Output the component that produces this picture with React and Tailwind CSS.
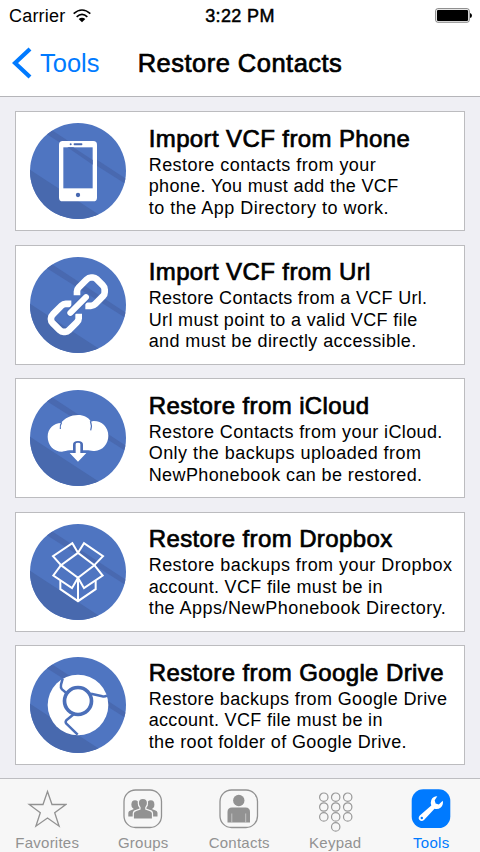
import React from "react";

function Disc({ shift = 0, children }) {
  return (
    <svg viewBox="60 54 288 288" className="h-24 w-24 shrink-0">
      <defs>
        <clipPath id="disc">
          <circle cx="204" cy="198" r="144" />
        </clipPath>
      </defs>
      <g clipPath="url(#disc)">
        <rect x="60" y="54" width="288" height="288" fill="#4f75c1" />
        <path d="M108 86 L126 76 L352 224 V240 Z" fill="#4969b0" />
        <path d="M56 192 L272 332 V345 H56 Z" fill="#4869ae" />
      </g>
      <g transform={`translate(0 ${shift})`}>{children}</g>
    </svg>
  );
}

const PhoneIcon = () => (
  <Disc>
    <rect x="147" y="108" width="114" height="181" rx="11" fill="#fff" />
    <rect x="160" y="127" width="88" height="123" fill="#4f75c1" />
    <path d="M172 127 H190 L248 165 V179 Z" fill="#4969b0" />
    <circle cx="182" cy="117.500" r="3" fill="#4667b0" />
    <rect x="191" y="114.500" width="26" height="6" rx="2" fill="#4667b0" />
    <circle cx="204" cy="270" r="6.500" fill="#4667b0" />
  </Disc>
);

const LinkIcon = () => (
  <Disc shift={4.5}>
    <g fill="none" stroke="#fff" strokeWidth="20" strokeLinejoin="round">
      <path d="M201 164 L201 153 Q201 146 206 141 L230 117 Q236 111 243 111 L249 111 Q255 111 260 116 L278 134 Q284 140 284 147 L284 155 Q284 162 279 167 L256 190 Q250 196 243 196 L226 196" />
      <path d="M184 190 L167 190 Q160 190 155 195 L130 220 Q123 227 123 233 L123 237 Q123 243 128 248 L149 269 Q154 274 160 274 L166 274 Q172 274 177 269 L200 246 Q206 240 206 234 L206 220" />
    </g>
    <path d="M181 217 L228 170" fill="none" stroke="#4c70bb" strokeWidth="27" strokeLinecap="round" />
    <path d="M181 217 L228 170" fill="none" stroke="#fff" strokeWidth="18" strokeLinecap="round" />
  </Disc>
);

const CloudIcon = () => (
  <Disc shift={3}>
    <path d="M153 150 C132 150 113 166 113 191 C113 216 131 236 156 236 C164 236 170 232 178 232 H230 C238 232 244 235 254 234 C278 232 295 213 295 188 C295 162 275 144 252 144 C248 144 246 145 243 146 C236 133 221 126 204 126 C183 126 164 135 153 150 Z" fill="#fff" />
    <path d="M151 168 C150 160 151 154 155 148 M241 145 C245 154 245 163 242 172" fill="none" stroke="#4c70bb" strokeWidth="3.500" />
    <path d="M189 240 V215 Q189 204 204 204 Q219 204 219 215 V240 Z" fill="#4a6cb6" />
    <path d="M197 213 Q197 209 204 209 Q211 209 211 213 V240 H229 L204 266 L179 240 H197 Z" fill="#fff" />
  </Disc>
);

const BoxIcon = () => (
  <Disc shift={4.5}>
    <g fill="none" stroke="#fff" strokeWidth="6" strokeLinejoin="miter">
      <path d="M204 136 L253 173 L204 211 L153 173 Z" />
      <path d="M204 136 L187 107 L129 146 L153 173" />
      <path d="M204 136 L222 107 L279 146 L253 173" />
      <path d="M153 173 L130 204 L186 242 L204 211 L222 242 L278 204 L253 173" />
      <path d="M151 220 V245 L204 281 L257 245 V220 M204 211 V281" />
    </g>
  </Disc>
);

const ChromeIcon = () => (
  <Disc shift={3}>
    <circle cx="204" cy="195" r="91" fill="#fff" />
    <circle cx="204" cy="183" r="40.500" fill="none" stroke="#4b6fb9" strokeWidth="11" />
    <g fill="none" stroke="#4b6fb9" strokeWidth="7.500" strokeLinejoin="round">
      <path d="M169 159 L156 148 Q151 143 153 134 L158 116" />
      <path d="M243 161 L277 169 Q284 171 291 167" />
      <path d="M192 222 L169 241 Q165 246 169 251 L203 284" />
    </g>
  </Disc>
);

const cards = [
  {
    icon: PhoneIcon,
    title: "Import VCF from Phone",
    lines: [
      ["Restore contacts from your", "tracking-[0.44px]"],
      ["phone. You must add the VCF", "tracking-[0.36px]"],
      ["to the App Directory to work.", "tracking-[0.49px]"],
    ],
  },
  {
    icon: LinkIcon,
    title: "Import VCF from Url",
    lines: [
      ["Restore Contacts from a VCF Url.", "tracking-[0.3px]"],
      ["Url must point to a valid VCF file", "tracking-[0.35px]"],
      ["and must be directly accessible.", "tracking-[0.4px]"],
    ],
  },
  {
    icon: CloudIcon,
    title: "Restore from iCloud",
    lines: [
      ["Restore Contacts from your iCloud.", "tracking-[0.38px]"],
      ["Only the backups uploaded from", "tracking-[0.45px]"],
      ["NewPhonebook can be restored.", "tracking-[0.4px]"],
    ],
  },
  {
    icon: BoxIcon,
    title: "Restore from Dropbox",
    lines: [
      ["Restore backups from your Dropbox", "tracking-[0.44px]"],
      ["account. VCF file must be in", "tracking-[0.32px]"],
      ["the Apps/NewPhonebook Directory.", "tracking-[0.46px]"],
    ],
  },
  {
    icon: ChromeIcon,
    title: "Restore from Google Drive",
    lines: [
      ["Restore backups from Google Drive", "tracking-[0.38px]"],
      ["account. VCF file must be in", "tracking-[0.32px]"],
      ["the root folder of Google Drive.", "tracking-[0.38px]"],
    ],
  },
];

function Card({ icon: Icon, title, lines }) {
  return (
    <section className="flex h-[120px] w-full border border-[#bcbcbf] bg-white pt-[11px] pl-[14px]">
      <Icon />
      <div className="ml-[22.7px] pt-[0.5px] whitespace-nowrap">
        <h2 className="text-[24px] leading-[29px] tracking-[0.39px] [-webkit-text-stroke:0.7px_#000]">{title}</h2>
        <p className="mt-[2px] text-[18px] leading-[21.5px]">
          {lines.map(([text, tracking]) => (
            <span key={text} className={`block ${tracking}`}>{text}</span>
          ))}
        </p>
      </div>
    </section>
  );
}

const StarIcon = () => (
  <svg viewBox="0 0 40 40" className="h-10 w-10">
    <path d="M20.500 2.500 L25 15.500 L38.800 15.500 L27.700 23.800 L32.100 37.200 L20.500 29 L8.900 37.200 L13.300 23.800 L2.200 15.500 L16 15.500 Z" fill="none" stroke="#929292" strokeWidth="1.300" />
  </svg>
);

const GroupsIcon = () => (
  <svg viewBox="0 0 40 40" className="h-10 w-10">
    <rect x="1" y="1" width="37.500" height="37.500" rx="11.500" fill="none" stroke="#929292" strokeWidth="1.300" />
    <g fill="#929292">
      <ellipse cx="12" cy="15.500" rx="3.600" ry="4.300" />
      <ellipse cx="27.800" cy="15.500" rx="3.600" ry="4.300" />
      <path d="M5.300 27.500 V23.800 Q5.300 22 8 21.300 L10.500 20.300 V17 H29.300 V20.300 L32 21.300 Q34.500 22 34.500 23.800 V27.500 Z" />
    </g>
    <path
      d="M10.300 30 V24.500 Q10.300 22 13.300 21.300 L17 20 L17 18.500 Q15.300 16.800 15.300 14 Q15.300 9.300 19.900 9.300 Q24.500 9.300 24.500 14 Q24.500 16.800 22.800 18.500 V20 L26.500 21.300 Q29.500 22 29.500 24.500 V30 Z"
      fill="#929292"
      stroke="#f7f7f7"
      strokeWidth="1.200"
    />
  </svg>
);

const ContactIcon = () => (
  <svg viewBox="0 0 40 40" className="h-10 w-10">
    <rect x="1" y="1" width="37.500" height="37.500" rx="11.500" fill="none" stroke="#929292" strokeWidth="1.300" />
    <circle cx="19.800" cy="11.500" r="5.700" fill="#929292" />
    <path d="M8.500 33.500 V23 Q8.500 18.500 13 18.500 H26.600 Q31 18.500 31 23 V33.500 Z" fill="#929292" />
    <path d="M12.800 24.500 V33.500 M26.700 24.500 V33.500" stroke="#d0d0d0" strokeWidth="0.800" />
  </svg>
);

const keys = [
  [8.8, 8.2], [20.7, 8.2], [32.7, 8.2],
  [8.8, 18], [20.7, 18], [32.7, 18],
  [8.8, 27.9], [20.7, 27.9], [32.7, 27.9],
  [20.7, 37.9],
];

const KeypadIcon = () => (
  <svg viewBox="0 0 40 40" className="h-10 w-10 overflow-visible">
    {keys.map(([x, y]) => (
      <circle key={`${x}-${y}`} cx={x} cy={y} r="4.200" fill="none" stroke="#999" strokeWidth="1.200" />
    ))}
  </svg>
);

const ToolsIcon = () => (
  <svg viewBox="0 0 40 40" className="h-10 w-10">
    <rect x="0.700" y="0.300" width="38.600" height="38.700" rx="11.500" fill="#007aff" />
    <path
      d="M26.300 7.300 Q22 7.200 20.300 11 Q19.300 13.500 20.300 16.500 L8.800 26.500 Q6.700 29 8.500 31 Q10.700 33 13 31 L23.500 19.800 Q27 20.800 29.800 18.500 Q32.800 15.500 31.700 11.800 L27.800 15.500 L24.600 14.500 L23.700 11.300 Z"
      fill="#fff"
    />
    <circle cx="10.800" cy="29" r="1.200" fill="#007aff" />
  </svg>
);

const tabs = [
  { label: "Favorites", icon: StarIcon },
  { label: "Groups", icon: GroupsIcon },
  { label: "Contacts", icon: ContactIcon },
  { label: "Keypad", icon: KeypadIcon },
  { label: "Tools", icon: ToolsIcon, active: true },
];

export default function App() {
  return (
    <div className="flex h-[852px] w-[480px] flex-col overflow-hidden bg-[#efeff4] font-['Liberation_Sans',Arial,sans-serif] text-black">
      <header className="h-[97px] border-b border-[#b5b5b9] bg-white">
        <div className="grid h-[31px] grid-cols-3 items-center">
          <div className="flex items-center pl-[9px]">
            <span className="text-[18px] leading-[30px] tracking-[0.2px]">Carrier</span>
            <svg viewBox="0 0 54 42" className="ml-[8px] h-[14px] w-[18px]">
              <g fill="none" stroke="#000" strokeWidth="5">
                <path d="M2 14 Q27 -8 52 14" />
                <path d="M11 23.500 Q27 9 43 23.500" />
              </g>
              <path d="M17 30 Q27 22 37 30 L27 40 Z" />
            </svg>
          </div>
          <div className="text-center text-[18px] leading-[30px] tracking-[0.35px] [-webkit-text-stroke:0.5px_#000]">3:22 PM</div>
          <svg viewBox="0 0 37 15" className="mr-[8px] h-[15px] w-[37px] justify-self-end">
            <rect x="0.700" y="0.700" width="33.500" height="13.500" rx="2" fill="none" stroke="#777" />
            <rect x="2" y="2" width="31" height="11" rx="1" fill="#000" />
            <path d="M35 5 Q37 5.500 37 7.500 Q37 9.500 35 10 Z" />
          </svg>
        </div>
        <div className="grid h-[63px] grid-cols-[126px_228px_126px] items-center">
          <div className="flex items-center pl-[12px] text-[#007aff]">
            <svg viewBox="0 0 20 32" className="h-8 w-5">
              <path d="M18 2 L3 16 L18 30" fill="none" stroke="#007aff" strokeWidth="4.200" />
            </svg>
            <span className="ml-[8px] text-[25.5px] leading-[32px]">Tools</span>
          </div>
          <h1 className="text-center text-[25.5px] leading-[32px] tracking-[0.48px] whitespace-nowrap [-webkit-text-stroke:0.7px_#000]">Restore Contacts</h1>
        </div>
      </header>
      <main className="flex flex-1 flex-col gap-[13.5px] px-[15px] pt-[14px]">
        {cards.map((card) => (
          <Card key={card.title} {...card} />
        ))}
      </main>
      <nav className="grid h-[74px] grid-cols-5 border-t border-[#bdbdc1] bg-[#f7f7f7]">
        {tabs.map(({ label, icon: Icon, active }) => (
          <div key={label} className={`flex flex-col items-center pt-[10px] pr-[1.5px] ${active ? "text-[#007aff]" : "text-[#929292]"}`}>
            <Icon />
            <span className="mt-[5px] text-[15px] leading-[18px] tracking-[0.25px]">{label}</span>
          </div>
        ))}
      </nav>
    </div>
  );
}
